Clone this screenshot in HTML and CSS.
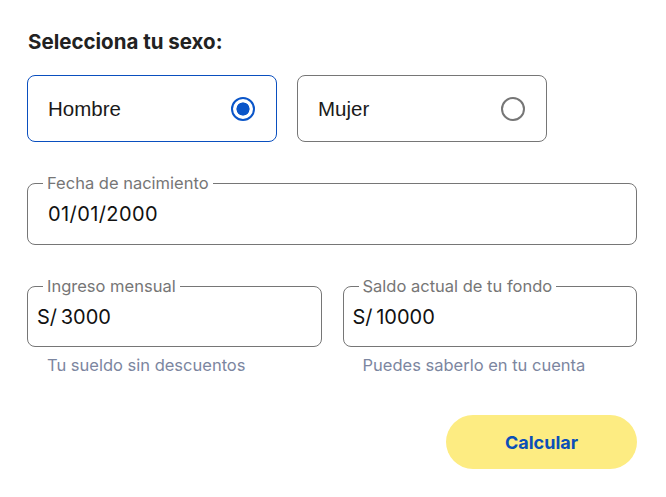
FILE: index.html
```html
<!DOCTYPE html>
<html lang="es">
<head>
<meta charset="utf-8">
<link rel="stylesheet" href="styles.css">
</head>
<body>
<form class="form">
  <h2 class="title">Selecciona tu sexo:</h2>
  <div class="options">
    <label class="option option--active">
      <span class="option-text">Hombre</span>
      <span class="radio radio--checked"></span>
    </label>
    <label class="option">
      <span class="option-text">Mujer</span>
      <span class="radio"></span>
    </label>
  </div>
  <div class="field field--full">
    <span class="field-label">Fecha de nacimiento</span>
    <div class="field-value">01/01/2000</div>
  </div>
  <div class="row">
    <div class="col">
      <div class="field">
        <span class="field-label">Ingreso mensual</span>
        <div class="field-value field-value--money">S/&#8201;3000</div>
      </div>
      <p class="helper">Tu sueldo sin descuentos</p>
    </div>
    <div class="col">
      <div class="field">
        <span class="field-label">Saldo actual de tu fondo</span>
        <div class="field-value field-value--money">S/&#8201;10000</div>
      </div>
      <p class="helper">Puedes saberlo en tu cuenta</p>
    </div>
  </div>
  <div class="actions">
    <button type="button" class="btn">Calcular</button>
  </div>
</form>
</body>
</html>
```
FILE: styles.css
```css
* { box-sizing: border-box; }
html, body { margin: 0; padding: 0; background: #fff; }
body {
  font-family: Inter, Lato, sans-serif;
  color: #1a1a1a;
}
.form {
  width: 666px;
  padding: 28px 29px 0 27px;
}
.title {
  margin: 0 0 0 1px;
  font-size: 20.5px;
  font-weight: 700;
  line-height: 28px;
  color: #222;
}
.options {
  display: flex;
  gap: 20px;
  margin-top: 19px;
}
.option {
  width: 250px;
  height: 67px;
  border: 1px solid #767676;
  border-radius: 8px;
  display: flex;
  align-items: center;
  justify-content: space-between;
  padding: 0 21px 0 20px;
}
.option--active { border-color: #0a4fbf; }
.option-text {
  font-family: "Liberation Sans", Arial, sans-serif;
  font-size: 20.5px;
  color: #1a1a1a;
}
.radio {
  width: 24px;
  height: 24px;
  border-radius: 50%;
  border: 2px solid #767676;
}
.radio--checked {
  border: 2.5px solid #0a55c9;
  background: radial-gradient(circle, #0a55c9 0 6.3px, #fff 6.8px);
}
.field {
  position: relative;
  border: 1px solid #767676;
  border-radius: 8px;
  height: 62px;
  padding: 0 20px;
  display: flex;
  align-items: center;
}
.field--full { margin-top: 41px; }
.field-label {
  position: absolute;
  top: -11px;
  left: 15px;
  padding: 0 4px;
  background: #fff;
  font-size: 16.5px;
  color: #767676;
  line-height: 20px;
}
.field-value {
  font-size: 20px;
  letter-spacing: 0.4px;
  color: #111;
  line-height: 24px;
}
.field-value--money { margin-left: -11px; letter-spacing: 0; }
.row {
  display: flex;
  gap: 21px;
  margin-top: 41px;
}
.col { flex: 1; }
.row .field { height: 61px; }
.helper {
  margin: 8px 0 0 20px;
  font-size: 16.5px;
  color: #7c86a0;
  line-height: 20px;
}
.actions {
  display: flex;
  justify-content: flex-end;
  margin-top: 40px;
}
.btn {
  width: 191px;
  height: 54px;
  border: none;
  border-radius: 27px;
  background: #fdec82;
  color: #0a4fb8;
  font-family: Inter, sans-serif;
  font-weight: 700;
  font-size: 18px;
  cursor: pointer;
}
```
